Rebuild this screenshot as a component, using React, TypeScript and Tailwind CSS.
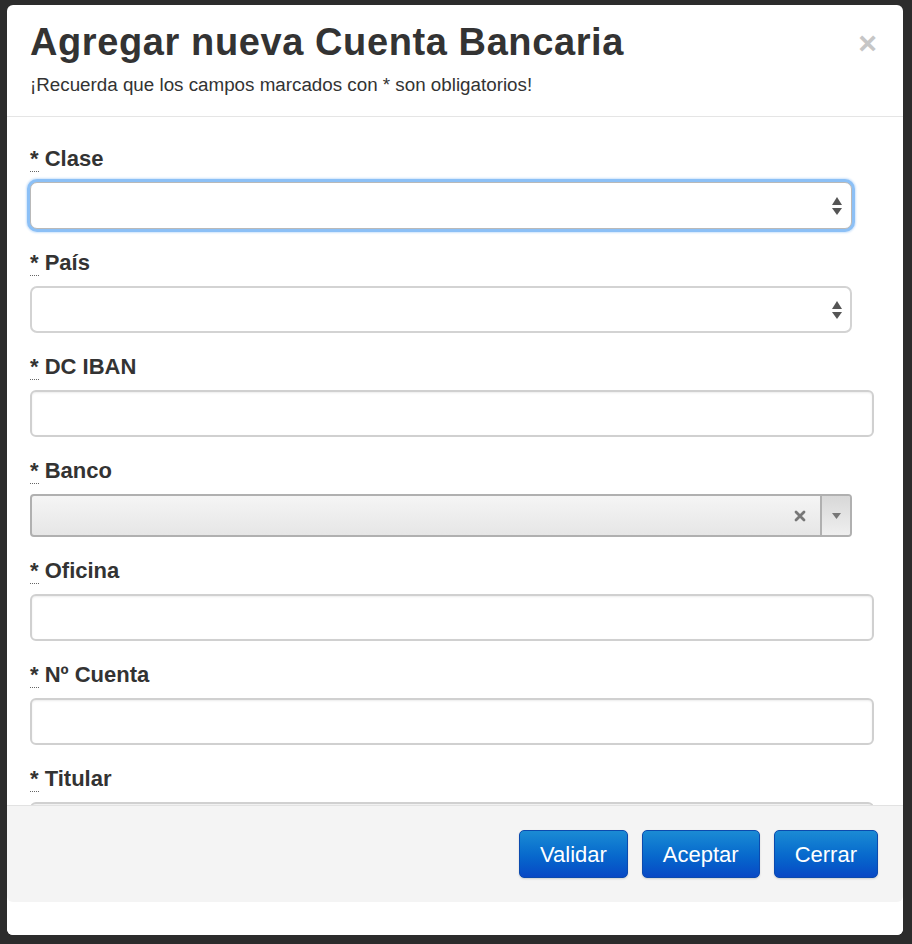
import type { ReactNode } from 'react';

function SelectArrows({ focused }: { focused?: boolean }) {
  return (
    <svg
      width="12"
      height="20"
      viewBox="0 0 12 20"
      className={focused ? 'absolute right-[8px] top-1/2 -translate-y-1/2' : 'absolute right-[7px] top-1/2 -translate-y-1/2'}
    >
      <path d="M6 1 L11 9 L1 9 Z" fill="#555" />
      <path d="M1 12 L11 12 L6 19 Z" fill="#555" />
    </svg>
  );
}

function Label({ children }: { children: ReactNode }) {
  return (
    <label className="block text-[22px] font-bold leading-6 text-[#333] mb-[11px]">
      <abbr className="no-underline border-b border-dotted border-[#666]" title="obligatorio">*</abbr> {children}
    </label>
  );
}

function NativeSelect({ focused }: { focused?: boolean }) {
  return (
    <div
      className={
        focused
          ? 'relative w-[822px] h-[47px] rounded-[7px] border border-[#b9b9b9] bg-white shadow-[0_0_0_3px_#8cc0f6,0_0_2px_4px_#cfe4fb]'
          : 'relative w-[822px] h-[47px] rounded-[7px] border-2 border-[#d3d3d3] bg-white'
      }
    >
      <SelectArrows focused={focused} />
    </div>
  );
}

function TextInput() {
  return (
    <div className="w-[844px] h-[47px] rounded-[6px] border-2 border-[#d0d0d0] bg-white shadow-[inset_0_1px_2px_rgba(0,0,0,0.08)]" />
  );
}

function Select2() {
  return (
    <div className="flex w-[822px] h-[43px] rounded-[4px] border-2 border-[#b0b0b0] bg-gradient-to-b from-[#f5f5f5] to-[#e6e6e6] overflow-hidden">
      <div className="flex-1 flex items-center justify-end pr-[14px]">
        <svg width="12" height="12" viewBox="0 0 12 12">
          <path d="M2 2 L10 10 M10 2 L2 10" stroke="#777" strokeWidth="2.8" strokeLinecap="round" />
        </svg>
      </div>
      <div className="w-[30px] flex items-center justify-center border-l-2 border-[#b0b0b0] bg-gradient-to-b from-[#d8d8d8] to-[#efefef]">
        <svg width="11" height="8" viewBox="0 0 11 8">
          <path d="M1 1 L10 1 L5.5 7 Z" fill="#777" />
        </svg>
      </div>
    </div>
  );
}

function Field({ label, children, last }: { label: string; children: ReactNode; last?: boolean }) {
  return (
    <div className={last ? '' : 'mb-[22px]'}>
      <Label>{label}</Label>
      {children}
    </div>
  );
}

function BlueButton({ children }: { children: ReactNode }) {
  return (
    <button className="h-[48px] px-[20px] rounded-[5px] border border-[#0b4aae] bg-gradient-to-b from-[#1b8bd4] to-[#0a48c5] text-white text-[22px] shadow-[0_1px_2px_rgba(0,0,0,0.15)]">
      {children}
    </button>
  );
}

export default function App() {
  return (
    <div className="w-full h-[944px] bg-[#2c2c2c] pt-[5px] pl-[7px] font-['Liberation_Sans',Arial,sans-serif] overflow-hidden">
      <div className="w-[896px] h-[930px] bg-white rounded-[6px] flex flex-col overflow-hidden">
        {/* Header */}
        <div className="pt-[16px] pb-[19px] pl-[23px] pr-[26px] border-b border-[#e5e5e5]">
          <div className="flex items-center justify-between h-[42px]">
            <h1 className="text-[38px] font-bold leading-[42px] tracking-[0.6px] text-[#333]">Agregar nueva Cuenta Bancaria</h1>
            <span className="text-[32px] font-bold leading-none text-[#c6c6c6] mt-[2px]">×</span>
          </div>
          <p className="mt-[10px] text-[18.8px] leading-6 text-[#333]">¡Recuerda que los campos marcados con * son obligatorios!</p>
        </div>

        {/* Body */}
        <div className="flex-1 overflow-hidden pt-[30px] pl-[23px] pr-[29px]">
          <Field label="Clase">
            <NativeSelect focused />
          </Field>
          <Field label="País">
            <NativeSelect />
          </Field>
          <Field label="DC IBAN">
            <TextInput />
          </Field>
          <Field label="Banco">
            <Select2 />
          </Field>
          <Field label="Oficina">
            <TextInput />
          </Field>
          <Field label="Nº Cuenta">
            <TextInput />
          </Field>
          <Field label="Titular" last>
            <TextInput />
          </Field>
        </div>

        {/* Footer */}
        <div className="h-[97px] shrink-0 border-t border-[#e2e2e2] bg-[#f4f4f4] rounded-b-[6px] flex items-center justify-end gap-[14px] pr-[25px]">
          <BlueButton>Validar</BlueButton>
          <BlueButton>Aceptar</BlueButton>
          <BlueButton>Cerrar</BlueButton>
        </div>
        <div className="h-[33px] shrink-0 bg-white" />
      </div>
    </div>
  );
}
